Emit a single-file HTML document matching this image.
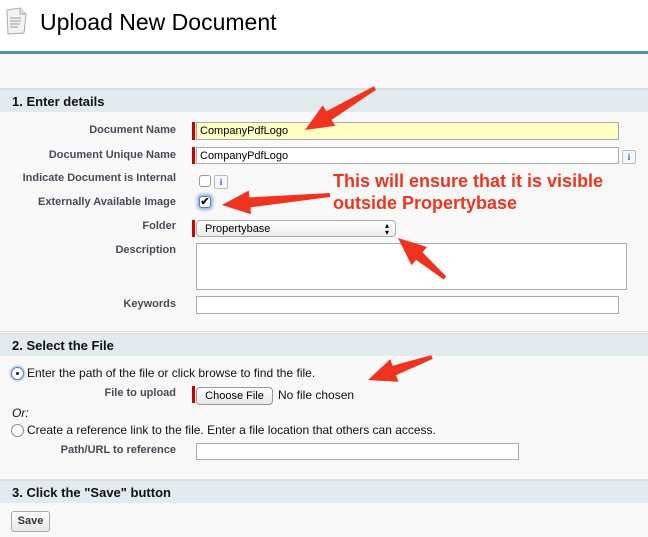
<!DOCTYPE html>
<html><head><meta charset="utf-8"><style>
*{margin:0;padding:0;box-sizing:border-box}
body{width:648px;height:537px;overflow:hidden;background:#f8f8f8;font-family:"Liberation Sans",Arial,sans-serif;position:relative}
.a{position:absolute}
.top{left:0;top:0;width:648px;height:52px;background:#fff}
.teal{left:0;top:51px;width:648px;height:3px;background:#4d96a1}
.sec{left:0;width:648px;height:23px;background:#e3eaed;border-top:1px solid #d8dde0;font-weight:bold;font-size:13px;color:#111;padding:4px 0 0 12px}
.lbl{right:472px;font-size:11px;font-weight:bold;color:#4a4a56;text-align:right;white-space:nowrap}
.in{background:#fff;border:1px solid #aaa;font-size:11px;padding:2px 3px;color:#000}
.req{width:3px;background:#c00;left:192px}
.info{width:14px;height:14px;border:1px solid #bbb;border-radius:2px;background:#f4f6f8;color:#1a6fcf;font-size:9px;font-weight:bold;text-align:center;line-height:12px;font-family:"Liberation Serif",serif}
.cb{width:12px;height:12px;border:1px solid #999;border-radius:3px;background:#fff}
.t{font-size:12px;color:#111;white-space:nowrap}
.red{color:#f0331e;font-weight:bold;font-size:18px;white-space:nowrap;text-shadow:0 0 3px #fff,0 0 3px #fff}
.radio{width:13px;height:13px;border:1px solid #888;border-radius:50%;background:#fff}
</style></head><body>
<div class="a top"></div>
<svg class="a" style="left:4px;top:7px" width="24" height="28" viewBox="0 0 24 28"><path d="M3 3 L16 1 L22 7 L20 26 L4 27 Z" fill="#f2f2f2" stroke="#aaa"/><path d="M16 1 L16 7 L22 7" fill="#ddd" stroke="#aaa"/><path d="M6 11h11M6 14h11M6 17h10M6 20h8" stroke="#999" stroke-width="1"/></svg>
<div class="a" style="left:40px;top:9px;font-size:23px;color:#000">Upload New Document</div>
<div class="a teal"></div>
<div class="a" style="left:0;top:88px;width:648px;height:1px;background:#ddd"></div>
<div class="a sec" style="top:89px">1. Enter details</div>

<div class="a lbl" style="top:124px">Document Name</div>
<div class="a req" style="top:122px;height:18px"></div>
<div class="a in" style="left:196px;top:122px;width:423px;height:18px;background:#ffffc4">CompanyPdfLogo</div>

<div class="a lbl" style="top:149px">Document Unique Name</div>
<div class="a req" style="top:147px;height:17px"></div>
<div class="a in" style="left:196px;top:147px;width:423px;height:17px">CompanyPdfLogo</div>
<div class="a info" style="left:622px;top:150px">i</div>

<div class="a lbl" style="top:172px">Indicate Document is Internal</div>
<div class="a cb" style="left:199px;top:175px"></div>
<div class="a info" style="left:214px;top:175px">i</div>

<div class="a lbl" style="top:196px">Externally Available Image</div>
<div class="a cb" style="left:199px;top:196px;border-color:#5a7fb5;box-shadow:0 0 3px 2px #8fb2e8;font-size:11px;line-height:10px;text-align:center;font-weight:bold;color:#111">✔</div>

<div class="a lbl" style="top:220px">Folder</div>
<div class="a req" style="top:220px;height:17px"></div>
<div class="a in" style="left:196px;top:220px;width:200px;height:17px;border-radius:4px;background:linear-gradient(#fff,#ececec);padding-left:8px">Propertybase<span style="position:absolute;right:6px;top:1px;font-size:8px;line-height:7px">▴<br>▾</span></div>

<div class="a lbl" style="top:244px">Description</div>
<div class="a in" style="left:196px;top:243px;width:431px;height:47px"></div>

<div class="a lbl" style="top:298px">Keywords</div>
<div class="a in" style="left:196px;top:296px;width:423px;height:18px"></div>

<div class="a" style="left:0;top:331px;width:648px;height:1px;background:#ddd"></div>
<div class="a sec" style="top:333px">2. Select the File</div>

<div class="a radio" style="left:11px;top:367px;border-color:#5a7fb5;box-shadow:0 0 2px 1px #9bbbe8"><div class="a" style="left:4px;top:4px;width:3px;height:3px;border-radius:50%;background:#222"></div></div>
<div class="a t" style="left:27px;top:366px">Enter the path of the file or click browse to find the file.</div>
<div class="a lbl" style="top:387px">File to upload</div>
<div class="a req" style="top:386px;height:17px"></div>
<div class="a" style="left:196px;top:387px;width:77px;height:18px;border:1px solid #999;border-radius:4px;background:linear-gradient(#fff,#e8e8e8);font-size:11px;text-align:center;line-height:16px">Choose File</div>
<div class="a t" style="left:278px;top:388px">No file chosen</div>
<div class="a t" style="left:12px;top:406px;font-style:italic">Or:</div>
<div class="a radio" style="left:11px;top:424px"></div>
<div class="a t" style="left:27px;top:423px">Create a reference link to the file. Enter a file location that others can access.</div>
<div class="a lbl" style="top:444px">Path/URL to reference</div>
<div class="a in" style="left:196px;top:443px;width:323px;height:17px"></div>

<div class="a" style="left:0;top:479px;width:648px;height:1px;background:#ddd"></div>
<div class="a sec" style="top:480px">3. Click the "Save" button</div>
<div class="a" style="left:11px;top:511px;width:39px;height:21px;border:1px solid #aaa;border-radius:3px;background:linear-gradient(#fff,#e6e6e6);font-size:11px;font-weight:bold;color:#333;text-align:center;line-height:19px">Save</div>

<svg class="a" style="left:0;top:0" width="648" height="537">
<g fill="#f0331e">
<polygon points="376,89.7 331.6,119.9 335.2,125.9 305,130 322.8,105.3 326.4,111.3 374,86.3"/>
<polygon points="330.2,197 250.4,207.4 251,214.3 222,205 248.8,190.5 249.4,197.4 329.8,193"/>
<polygon points="446.3,276.5 422.5,252.3 427.1,247 398,238 411.5,265.2 416.1,259.9 443.7,279.5"/>
<polygon points="432.7,358.9 396,375.2 398.4,381.8 368,380 390.2,359.2 392.6,365.8 431.3,355.1"/>
</g></svg>
<div class="a red" style="left:333px;top:171px">This will ensure that it is visible</div>
<div class="a red" style="left:333px;top:193px">outside Propertybase</div>
</body></html>
